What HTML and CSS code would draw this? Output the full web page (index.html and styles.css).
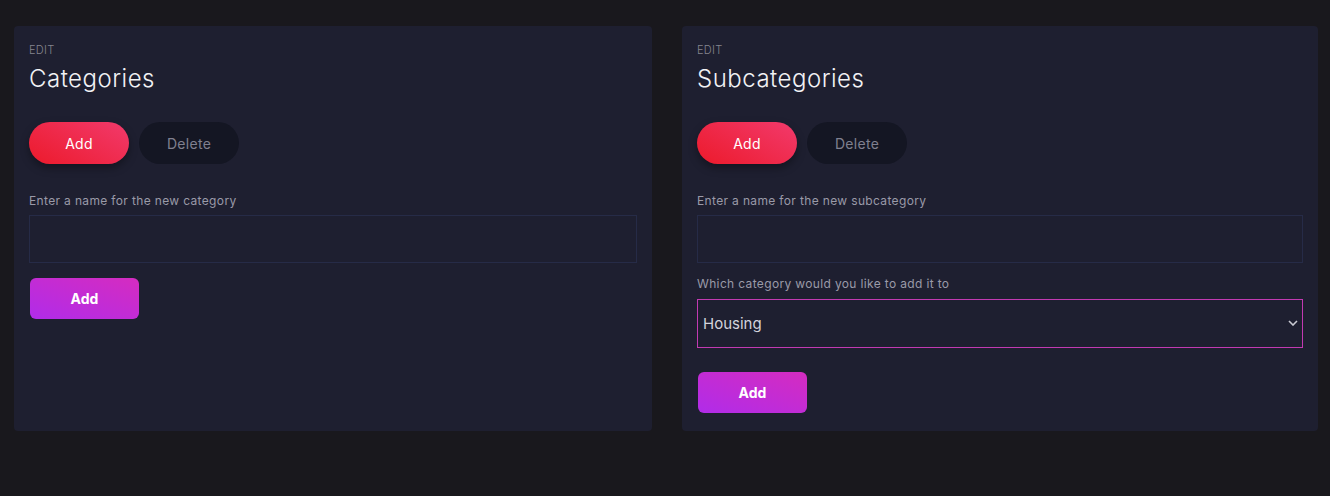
FILE: index.html
```html
<!DOCTYPE html>
<html lang="en">
<head>
<meta charset="utf-8">
<title>Edit</title>
<link rel="stylesheet" href="styles.css">
</head>
<body>
<main class="page">
  <section class="card">
    <div class="eyebrow">EDIT</div>
    <h2 class="title">Categories</h2>
    <div class="actions">
      <button class="pill pill-primary">Add</button>
      <button class="pill pill-muted">Delete</button>
    </div>
    <label class="label first">Enter a name for the new category</label>
    <input class="field" type="text">
    <button class="submit submit-a">Add</button>
  </section>
  <section class="card">
    <div class="eyebrow">EDIT</div>
    <h2 class="title">Subcategories</h2>
    <div class="actions">
      <button class="pill pill-primary">Add</button>
      <button class="pill pill-muted">Delete</button>
    </div>
    <label class="label first">Enter a name for the new subcategory</label>
    <input class="field" type="text">
    <label class="label second">Which category would you like to add it to</label>
    <div class="select-wrap">
      <select class="select">
        <option>Housing</option>
      </select>
      <svg class="chev" width="10" height="6" viewBox="0 0 10 6"><path d="M1 1l4 4 4-4" fill="none" stroke="#c9c9d2" stroke-width="1.6"/></svg>
    </div>
    <button class="submit submit-b">Add</button>
  </section>
</main>
</body>
</html>
```

FILE: styles.css
```css
* { box-sizing: border-box; }
html, body { margin: 0; height: 100%; }
body {
  background: #19181d;
  font-family: Inter, "Open Sans", "Liberation Sans", sans-serif;
  color: #e6e6ec;
}
.page {
  display: grid;
  grid-template-columns: 638px 636px;
  column-gap: 30px;
  padding: 26px 12px 0 14px;
  align-items: stretch;
}
.card {
  background: #1e1f30;
  border-radius: 4px;
  padding: 16px 15px 18px 15px;
  display: flex;
  flex-direction: column;
  align-items: flex-start;
}
.eyebrow {
  font-size: 11px;
  line-height: 16px;
  font-weight: 300;
  color: #85858f;
  letter-spacing: 0.3px;
}
.title {
  margin: 5px 0 0;
  font-size: 24px;
  line-height: 32px;
  font-weight: 300;
  color: #f2f2f5;
  letter-spacing: 0.5px;
}
.actions {
  display: flex;
  gap: 10px;
  margin-top: 27px;
}
.pill {
  width: 100px;
  height: 42px;
  border: 0;
  border-radius: 21px;
  font-family: inherit;
  font-size: 14px;
  font-weight: 400;
  padding: 0;
  letter-spacing: 0.3px;
}
.pill-primary {
  background: linear-gradient(30deg, #ec1a2b 0%, #f23a6c 100%);
  color: #ffffff;
  box-shadow: 0 4px 8px rgba(0, 0, 0, 0.35);
}
.pill-muted {
  background: #141623;
  color: #80808f;
}
.label {
  font-size: 12px;
  line-height: 16px;
  color: #9a9aa8;
  font-weight: 400;
  letter-spacing: 0.35px;
}
.label.first { margin-top: 29px; }
.label.second { margin-top: 13px; }
.field {
  margin-top: 6px;
  width: 100%;
  height: 48px;
  background: transparent;
  border: 1px solid #262b47;
  border-radius: 0;
  outline: none;
}
.select-wrap {
  position: relative;
  margin-top: 7px;
  width: 100%;
}
.select {
  appearance: none;
  -webkit-appearance: none;
  display: block;
  width: 100%;
  height: 49px;
  background: transparent;
  border: 1px solid #c23ab2;
  border-radius: 0;
  color: #d4d4dc;
  font-family: inherit;
  font-size: 15px;
  padding: 0 0 0 5px;
  outline: none;
}
.chev {
  position: absolute;
  right: 5px;
  top: 21px;
}
.submit {
  margin-left: 1px;
  width: 109px;
  height: 41px;
  border: 0;
  border-radius: 6px;
  background: linear-gradient(20deg, #b02ce9 0%, #d52cc0 100%);
  color: #ffffff;
  font-family: inherit;
  font-size: 14px;
  font-weight: 700;
  padding: 0;
}
.submit-a { margin-top: 15px; }
.submit-b { margin-top: 24px; }
```
